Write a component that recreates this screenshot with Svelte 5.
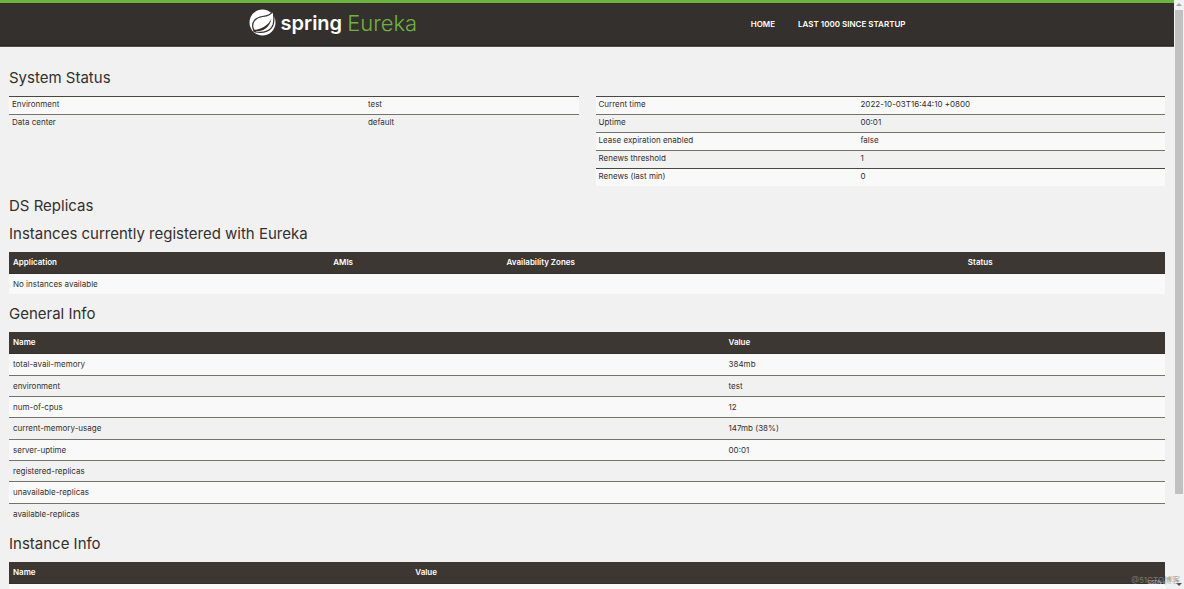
<script>
  const environment = [
    ['Environment', 'test'],
    ['Data center', 'default']
  ];
  const runtime = [
    ['Current time', '2022-10-03T16:44:10 +0800'],
    ['Uptime', '00:01'],
    ['Lease expiration enabled', 'false'],
    ['Renews threshold', '1'],
    ['Renews (last min)', '0']
  ];
  const general = [
    ['total-avail-memory', '384mb'],
    ['environment', 'test'],
    ['num-of-cpus', '12'],
    ['current-memory-usage', '147mb (38%)'],
    ['server-uptime', '00:01'],
    ['registered-replicas', ''],
    ['unavailable-replicas', ''],
    ['available-replicas', '']
  ];
</script>

<div class="window">
  <div class="page">
    <header>
      <a class="brand" href="#home" aria-label="Spring Eureka">
        <svg viewBox="0 0 54 54" aria-hidden="true">
          <circle cx="27" cy="27" r="26" fill="#fff" />
          <path d="M48 4C44 12 37 14 27 15C13 17 5 26 8 38C9 42 11 44 13 46C31 49 44 43 48 32C51 23 50 13 48 4Z" fill="#fff" stroke="#34302d" stroke-width="2.5" />
          <path d="M11 42C26 39 38 34 45 19C41 38 29 45 11 45Z" fill="#34302d" />
          <circle cx="11" cy="44" r="2.5" fill="#34302d" />
        </svg>
        <span class="spring">spring</span>
        <span class="eureka">Eureka</span>
      </a>
      <nav>
        <a href="#home">HOME</a>
        <a href="#lastn">LAST 1000 SINCE STARTUP</a>
      </nav>
    </header>

    <main>
      <h1>System Status</h1>
      <div class="columns">
        <table class="compact env">
          <colgroup><col class="key" /><col /></colgroup>
          <tbody>
            {#each environment as [name, value]}
              <tr><td>{name}</td><td>{value}</td></tr>
            {/each}
          </tbody>
        </table>
        <table class="compact runtime">
          <colgroup><col class="key" /><col /></colgroup>
          <tbody>
            {#each runtime as [name, value]}
              <tr><td>{name}</td><td>{value}</td></tr>
            {/each}
          </tbody>
        </table>
      </div>

      <h1>DS Replicas</h1>
      <h1>Instances currently registered with Eureka</h1>
      <table class="wide instances">
        <colgroup><col class="app" /><col class="amis" /><col class="zones" /><col /></colgroup>
        <thead>
          <tr><th>Application</th><th>AMIs</th><th>Availability Zones</th><th>Status</th></tr>
        </thead>
        <tbody>
          <tr><td colspan="4">No instances available</td></tr>
        </tbody>
      </table>

      <h1>General Info</h1>
      <table class="wide general">
        <colgroup><col class="key" /><col /></colgroup>
        <thead>
          <tr><th>Name</th><th>Value</th></tr>
        </thead>
        <tbody>
          {#each general as [name, value]}
            <tr><td>{name}</td><td>{value}</td></tr>
          {/each}
        </tbody>
      </table>

      <h1>Instance Info</h1>
      <table class="wide info">
        <colgroup><col class="key" /><col /></colgroup>
        <thead>
          <tr><th>Name</th><th>Value</th></tr>
        </thead>
        <tbody>
          <tr><td></td><td></td></tr>
        </tbody>
      </table>
    </main>
  </div>

  <div class="scrollbar" aria-hidden="true">
    <svg viewBox="0 0 10 10"><path d="M2 6L5 3L8 6Z" fill="#a3a3a3" /></svg>
    <div class="track"><div class="thumb"></div></div>
    <svg viewBox="0 0 10 10"><path d="M2 4L5 7L8 4Z" fill="#505050" /></svg>
  </div>

  <div class="mark">@51CTO博客<span>CSDN @wei</span></div>
</div>

<style>
  :global(body) {
    margin: 0;
    background: #f1f1f1;
  }
  .window {
    position: relative;
    display: flex;
    height: 100vh;
    overflow: hidden;
    color: #34302d;
    font-family: Inter, "Noto Sans CJK SC", sans-serif;
    font-size: 8px;
    line-height: 12px;
  }
  .page {
    flex: 1;
    min-width: 0;
  }
  header {
    display: flex;
    align-items: center;
    box-sizing: border-box;
    height: 47px;
    padding: 0 21% 2px;
    border-top: 3px solid #6db33f;
    border-bottom: 1px solid #55514d;
    background: #34302d;
    box-shadow: inset 0 -1px #282421;
  }
  .brand {
    display: flex;
    align-items: center;
    gap: 5px;
    flex: 1;
    padding-left: 2px;
    font-size: 20px;
    line-height: 24px;
    padding-bottom: 2px;
    text-decoration: none;
    white-space: nowrap;
  }
  .brand svg {
    width: 27px;
    height: 27px;
  }
  .spring {
    color: #fff;
    font-weight: 600;
  }
  .eureka {
    color: #6db33f;
    font-size: 22px;
    font-weight: 300;
  }
  nav {
    display: flex;
    gap: 23px;
    padding-right: 22px;
    white-space: nowrap;
  }
  nav a {
    color: #fff;
    font-weight: 600;
    text-decoration: none;
  }
  main {
    padding: 21px 9px 0;
  }
  h1 {
    margin: 0;
    padding: 0 0 8px;
    font-size: 15px;
    font-weight: 400;
    line-height: 20px;
  }
  .columns {
    display: grid;
    grid-template-columns: 1fr 1fr;
    align-items: start;
    gap: 17px;
    padding-bottom: 10px;
  }
  table {
    width: 100%;
    border-spacing: 0;
    table-layout: fixed;
  }
  td,
  th {
    text-align: left;
  }
  td {
    border-top: 1px solid #76726e;
  }
  tbody tr:nth-child(odd) {
    background: #f9f9f9;
  }
  .compact td {
    padding: 1px 3px 4px;
  }
  .compact tr:first-child td,
  .compact tr:nth-child(5) td {
    border-color: #4b4743;
  }
  .env .key {
    width: 62.5%;
  }
  .runtime .key {
    width: 46%;
  }
  .wide {
    margin-bottom: 10px;
  }
  .wide th {
    padding: 4px 4px 5px;
    background: #3c3732;
    color: #fff;
    font-weight: 600;
  }
  .wide td {
    height: 12px;
    padding: 4px;
  }
  .general tbody tr:nth-child(3n + 1) td {
    padding-bottom: 5px;
  }
  .wide tbody tr:first-child td {
    border-color: #34302d;
  }
  .app {
    width: 27.7%;
  }
  .amis {
    width: 15%;
  }
  .zones {
    width: 39.9%;
  }
  .general .key {
    width: 61.9%;
  }
  .info .key {
    width: 34.8%;
  }
  .scrollbar {
    display: flex;
    flex-direction: column;
    width: 10px;
    background: #f1f1f1;
  }
  .scrollbar svg {
    width: 10px;
    height: 10px;
  }
  .track {
    flex: 1;
    padding: 0 1px;
  }
  .thumb {
    height: 85%;
    background: #c1c1c1;
  }
  .mark {
    position: absolute;
    right: 4px;
    bottom: 3px;
    color: #8a8785;
    opacity: 0.8;
  }
  .mark span {
    position: absolute;
    right: 4px;
    bottom: 0;
    color: #ddd;
    font-size: 5px;
    line-height: 8px;
    white-space: nowrap;
  }
</style>
